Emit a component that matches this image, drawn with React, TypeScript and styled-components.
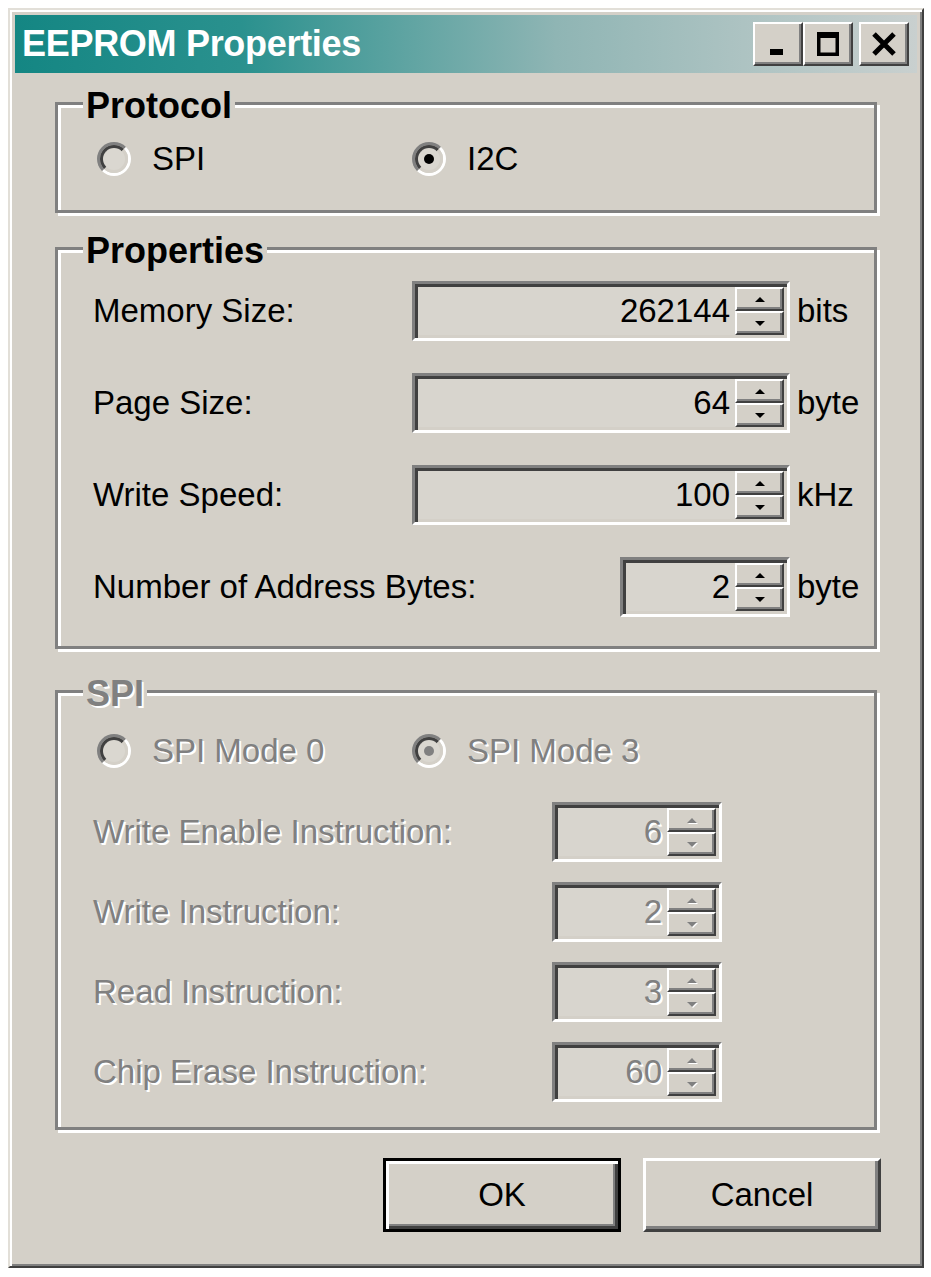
import { Fragment } from 'react';
import styled, { createGlobalStyle, css } from 'styled-components';

const GlobalStyle = createGlobalStyle`
  html, body {
    margin: 0;
    background: #fff;
  }
  body {
    font-family: "Liberation Sans", Arial, sans-serif;
  }
`;

const Window = styled.div`
  box-sizing: border-box;
  width: 916px;
  margin: 8px 0 0 8px;
  padding: 5px;
  background: #d4d0c8;
  border: 2px solid;
  border-color: #e2dfd8 #404040 #404040 #e2dfd8;
  box-shadow: inset 2px 2px 0 #fff, inset -2px -2px 0 #808080;
`;

const TitleBar = styled.div`
  height: 58px;
  display: flex;
  align-items: center;
  padding: 0 8px 0 7px;
  background: linear-gradient(90deg, #148683 0%, #2a918e 25%, #8fb5b4 60%, #c9d0cf 100%);
`;

const Title = styled.span`
  color: #fff;
  font-weight: bold;
  font-size: 36px;
  letter-spacing: -0.3px;
`;

const CaptionButtons = styled.div`
  margin-left: auto;
  display: flex;
`;

const CaptionButton = styled.div<{ $gap?: boolean }>`
  box-sizing: border-box;
  width: 50px;
  height: 44px;
  margin-left: ${(p) => (p.$gap ? '6px' : '0')};
  display: flex;
  align-items: center;
  justify-content: center;
  background: #d4d0c8;
  border: 2px solid;
  border-color: #fff #404040 #404040 #fff;
  box-shadow: inset -2px -2px 0 #808080;
`;

const Body = styled.div`
  padding: 29px 40px 29px 40px;
  display: flex;
  flex-direction: column;
`;

const Frame = styled.div<{ $mt?: number; $pb: number }>`
  margin-top: ${(p) => p.$mt ?? 0}px;
  border: 3px solid #808080;
  box-shadow: inset 3px 3px 0 #fff, 3px 3px 0 #fff;
  padding-bottom: ${(p) => p.$pb}px;
`;

const disabledText = css`
  color: #808080;
  text-shadow: 2px 2px 0 #fff;
`;

const Legend = styled.div<{ $disabled?: boolean }>`
  width: fit-content;
  margin: -17px 0 0 25px;
  padding: 0 3px;
  background: #d4d0c8;
  font-weight: bold;
  font-size: 36px;
  line-height: 36px;
  color: #000;
  ${(p) => p.$disabled && disabledText}
`;

const RadioRow = styled.div<{ $mt: number }>`
  margin-top: ${(p) => p.$mt}px;
  padding-left: 39px;
  display: grid;
  grid-template-columns: 315px auto;
  height: 36px;
  align-items: center;
`;

const Radio = styled.label<{ $disabled?: boolean }>`
  display: flex;
  align-items: center;
  gap: 21px;
  font-size: 33px;
  color: #000;
  ${(p) => p.$disabled && disabledText}
`;

const RadioOuter = styled.span`
  box-sizing: border-box;
  width: 34px;
  height: 34px;
  border-radius: 50%;
  border: 3px solid;
  border-color: #808080 #fff #fff #808080;
  display: flex;
`;

const RadioInner = styled.span`
  box-sizing: border-box;
  flex: 1;
  border-radius: 50%;
  border: 3px solid;
  border-color: #404040 #d4d0c8 #d4d0c8 #404040;
  background: #dad7d0;
  display: flex;
  align-items: center;
  justify-content: center;
`;

const RadioDot = styled.span<{ $disabled?: boolean }>`
  width: 10px;
  height: 10px;
  border-radius: 50%;
  background: ${(p) => (p.$disabled ? '#808080' : '#000')};
`;

const FieldGrid = styled.div<{ $mt: number; $gap: number; $cols: string }>`
  margin-top: ${(p) => p.$mt}px;
  padding-left: 35px;
  display: grid;
  grid-template-columns: ${(p) => p.$cols};
  grid-auto-rows: 60px;
  row-gap: ${(p) => p.$gap}px;
  align-items: center;
`;

const Label = styled.span<{ $disabled?: boolean }>`
  white-space: nowrap;
  font-size: 33px;
  color: #000;
  ${(p) => p.$disabled && disabledText}
`;

const Unit = styled.span`
  padding-left: 7px;
  font-size: 33px;
  color: #000;
`;

const Field = styled.div<{ $width: number }>`
  box-sizing: border-box;
  justify-self: end;
  width: ${(p) => p.$width}px;
  height: 60px;
  padding: 3px;
  display: flex;
  background: #d8d5ce;
  border: 3px solid;
  border-color: #808080 #fff #fff #808080;
  box-shadow: inset 3px 3px 0 #404040, inset -3px -3px 0 #d4d0c8;
`;

const Value = styled.span<{ $disabled?: boolean }>`
  flex: 1;
  text-align: right;
  padding-right: 5px;
  font-size: 33px;
  line-height: 48px;
  color: #000;
  ${(p) => p.$disabled && disabledText}
`;

const Spin = styled.div`
  width: 49px;
  display: flex;
  flex-direction: column;
`;

const SpinButton = styled.div`
  box-sizing: border-box;
  flex: 1;
  display: flex;
  align-items: center;
  justify-content: center;
  background: #d4d0c8;
  border: 2px solid;
  border-color: #fff #404040 #404040 #fff;
  box-shadow: inset -2px -2px 0 #808080;
`;

const Arrow = styled.span<{ $down?: boolean; $disabled?: boolean }>`
  width: 0;
  height: 0;
  border-left: 5px solid transparent;
  border-right: 5px solid transparent;
  ${(p) =>
    p.$down
      ? `border-top: 5px solid ${p.$disabled ? '#808080' : '#000'};`
      : `border-bottom: 5px solid ${p.$disabled ? '#808080' : '#000'};`}
  ${(p) => p.$disabled && 'filter: drop-shadow(1px 1px 0 #fff);'}
`;

const ButtonRow = styled.div`
  margin-top: 28px;
  margin-right: -4px;
  display: flex;
  justify-content: flex-end;
  gap: 22px;
`;

const PushButton = styled.button<{ $default?: boolean }>`
  box-sizing: border-box;
  width: 238px;
  height: 74px;
  padding: 0;
  font-family: "Liberation Sans", Arial, sans-serif;
  font-size: 33px;
  color: #000;
  background: #d4d0c8;
  border: 3px solid;
  ${(p) =>
    p.$default
      ? css`
          border-color: #000;
          box-shadow: inset 3px 3px 0 #fff, inset -3px -3px 0 #404040, inset -5px -5px 0 #808080;
        `
      : css`
          border-color: #fff #404040 #404040 #fff;
          box-shadow: inset -3px -3px 0 #808080;
        `}
`;

function SpinField({ value, width, disabled }: { value: string; width: number; disabled?: boolean }) {
  return (
    <Field $width={width}>
      <Value $disabled={disabled}>{value}</Value>
      <Spin>
        <SpinButton>
          <Arrow $disabled={disabled} />
        </SpinButton>
        <SpinButton>
          <Arrow $down $disabled={disabled} />
        </SpinButton>
      </Spin>
    </Field>
  );
}

function RadioOption({ label, checked, disabled }: { label: string; checked?: boolean; disabled?: boolean }) {
  return (
    <Radio $disabled={disabled}>
      <RadioOuter>
        <RadioInner>{checked && <RadioDot $disabled={disabled} />}</RadioInner>
      </RadioOuter>
      {label}
    </Radio>
  );
}

const properties = [
  { label: 'Memory Size:', value: '262144', unit: 'bits', width: 378 },
  { label: 'Page Size:', value: '64', unit: 'byte', width: 378 },
  { label: 'Write Speed:', value: '100', unit: 'kHz', width: 378 },
  { label: 'Number of Address Bytes:', value: '2', unit: 'byte', width: 170 },
];

const spiFields = [
  { label: 'Write Enable Instruction:', value: '6' },
  { label: 'Write Instruction:', value: '2' },
  { label: 'Read Instruction:', value: '3' },
  { label: 'Chip Erase Instruction:', value: '60' },
];

export default function App() {
  return (
    <>
      <GlobalStyle />
      <Window>
        <TitleBar>
          <Title>EEPROM Properties</Title>
          <CaptionButtons>
            <CaptionButton>
              <svg width="24" height="24" viewBox="0 0 24 24">
                <rect x="4" y="17" width="13" height="6" fill="#000" />
              </svg>
            </CaptionButton>
            <CaptionButton>
              <svg width="26" height="26" viewBox="0 0 26 26">
                <path d="M2 1h22v24H2z M5.5 7v14.5h15V7z" fill="#000" fillRule="evenodd" />
              </svg>
            </CaptionButton>
            <CaptionButton $gap>
              <svg width="26" height="24" viewBox="0 0 26 24">
                <path d="M3 2l20 20M23 2L3 22" stroke="#000" strokeWidth="5" />
              </svg>
            </CaptionButton>
          </CaptionButtons>
        </TitleBar>
        <Body>
          <Frame $pb={34}>
            <Legend>Protocol</Legend>
            <RadioRow $mt={16}>
              <RadioOption label="SPI" />
              <RadioOption label="I2C" checked />
            </RadioRow>
          </Frame>

          <Frame $mt={34} $pb={29}>
            <Legend>Properties</Legend>
            <FieldGrid $mt={12} $gap={32} $cols="319px 378px 84px">
              {properties.map((row) => (
                <Fragment key={row.label}>
                  <Label>{row.label}</Label>
                  <SpinField value={row.value} width={row.width} />
                  <Unit>{row.unit}</Unit>
                </Fragment>
              ))}
            </FieldGrid>
          </Frame>

          <Frame $mt={41} $pb={25}>
            <Legend $disabled>SPI</Legend>
            <RadioRow $mt={20}>
              <RadioOption label="SPI Mode 0" disabled />
              <RadioOption label="SPI Mode 3" checked disabled />
            </RadioRow>
            <FieldGrid $mt={34} $gap={20} $cols="459px 170px">
              {spiFields.map((row) => (
                <Fragment key={row.label}>
                  <Label $disabled>{row.label}</Label>
                  <SpinField value={row.value} width={170} disabled />
                </Fragment>
              ))}
            </FieldGrid>
          </Frame>

          <ButtonRow>
            <PushButton $default>OK</PushButton>
            <PushButton>Cancel</PushButton>
          </ButtonRow>
        </Body>
      </Window>
    </>
  );
}
